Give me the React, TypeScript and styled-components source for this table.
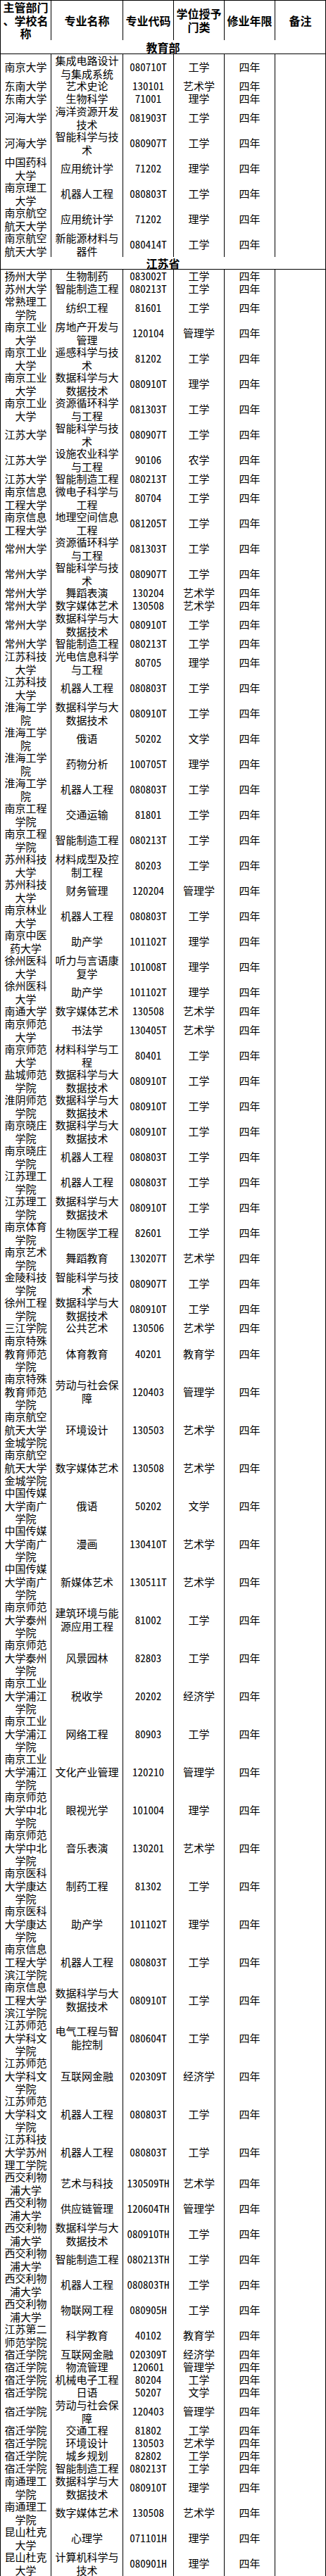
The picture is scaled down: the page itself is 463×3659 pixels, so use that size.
import React from "react";
import styled, { createGlobalStyle } from "styled-components";

const GlobalStyle = createGlobalStyle`
  html, body { margin: 0; padding: 0; background: #fff; }
  body { font-family: "Noto Sans CJK SC", sans-serif; color: #000; }
`;

const COLS = "71px 101px 71px 71px 71px 71px";
const PITCH = 18;

const Table = styled.div`
  width: 463px;
  box-sizing: border-box;
  background: #000;
  padding: 1px;
  display: flex;
  flex-direction: column;
  gap: 1px;
`;

const Row = styled.div<{ $h: number }>`
  display: grid;
  grid-template-columns: ${COLS};
  column-gap: 1px;
  height: ${(p) => p.$h}px;
`;

const Cell = styled.div<{ $mono?: boolean }>`
  background: #fff;
  display: flex;
  align-items: center;
  justify-content: center;
  text-align: center;
  min-width: 0;
  overflow: visible;
  font-size: 15px;
  line-height: 18.67px;
  font-family: ${(p) =>
    p.$mono
      ? `"Noto Sans Mono CJK SC", "Noto Sans CJK SC", monospace`
      : `"Noto Sans CJK SC", sans-serif`};
`;

const HeadCell = styled(Cell)`
  font-size: 16px;
  font-weight: 700;
`;

const SectionRow = styled.div<{ $h: number }>`
  background: #fff;
  height: ${(p) => p.$h}px;
  display: flex;
  align-items: center;
  justify-content: center;
  font-size: 16px;
  font-weight: 700;
  line-height: 18px;
`;

type Item =
  | { kind: "section"; title: string; h: number }
  | { kind: "row"; s: string; m: string; c: string; d: string; n: number };

const sec = (title: string, h: number): Item => ({ kind: "section", title, h });
const r = (s: string, m: string, c: string, d: string, n: number): Item => ({
  kind: "row",
  s,
  m,
  c,
  d,
  n,
});

const data: Item[] = [
  sec("教育部", 19),
  r("南京大学", "集成电路设计与集成系统", "080710T", "工学", 2),
  r("东南大学", "艺术史论", "130101", "艺术学", 1),
  r("东南大学", "生物科学", "71001", "理学", 1),
  r("河海大学", "海洋资源开发技术", "081903T", "工学", 2),
  r("河海大学", "智能科学与技术", "080907T", "工学", 2),
  r("中国药科大学", "应用统计学", "71202", "理学", 2),
  r("南京理工大学", "机器人工程", "080803T", "工学", 2),
  r("南京航空航天大学", "应用统计学", "71202", "理学", 2),
  r("南京航空航天大学", "新能源材料与器件", "080414T", "工学", 2),
  sec("江苏省", 17),
  r("扬州大学", "生物制药", "083002T", "工学", 1),
  r("苏州大学", "智能制造工程", "080213T", "工学", 1),
  r("常熟理工学院", "纺织工程", "81601", "工学", 2),
  r("南京工业大学", "房地产开发与管理", "120104", "管理学", 2),
  r("南京工业大学", "遥感科学与技术", "81202", "工学", 2),
  r("南京工业大学", "数据科学与大数据技术", "080910T", "理学", 2),
  r("南京工业大学", "资源循环科学与工程", "081303T", "工学", 2),
  r("江苏大学", "智能科学与技术", "080907T", "工学", 2),
  r("江苏大学", "设施农业科学与工程", "90106", "农学", 2),
  r("江苏大学", "智能制造工程", "080213T", "工学", 1),
  r("南京信息工程大学", "微电子科学与工程", "80704", "工学", 2),
  r("南京信息工程大学", "地理空间信息工程", "081205T", "工学", 2),
  r("常州大学", "资源循环科学与工程", "081303T", "工学", 2),
  r("常州大学", "智能科学与技术", "080907T", "工学", 2),
  r("常州大学", "舞蹈表演", "130204", "艺术学", 1),
  r("常州大学", "数字媒体艺术", "130508", "艺术学", 1),
  r("常州大学", "数据科学与大数据技术", "080910T", "工学", 2),
  r("常州大学", "智能制造工程", "080213T", "工学", 1),
  r("江苏科技大学", "光电信息科学与工程", "80705", "理学", 2),
  r("江苏科技大学", "机器人工程", "080803T", "工学", 2),
  r("淮海工学院", "数据科学与大数据技术", "080910T", "工学", 2),
  r("淮海工学院", "俄语", "50202", "文学", 2),
  r("淮海工学院", "药物分析", "100705T", "理学", 2),
  r("淮海工学院", "机器人工程", "080803T", "工学", 2),
  r("南京工程学院", "交通运输", "81801", "工学", 2),
  r("南京工程学院", "智能制造工程", "080213T", "工学", 2),
  r("苏州科技大学", "材料成型及控制工程", "80203", "工学", 2),
  r("苏州科技大学", "财务管理", "120204", "管理学", 2),
  r("南京林业大学", "机器人工程", "080803T", "工学", 2),
  r("南京中医药大学", "助产学", "101102T", "理学", 2),
  r("徐州医科大学", "听力与言语康复学", "101008T", "理学", 2),
  r("徐州医科大学", "助产学", "101102T", "理学", 2),
  r("南通大学", "数字媒体艺术", "130508", "艺术学", 1),
  r("南京师范大学", "书法学", "130405T", "艺术学", 2),
  r("南京师范大学", "材料科学与工程", "80401", "工学", 2),
  r("盐城师范学院", "数据科学与大数据技术", "080910T", "工学", 2),
  r("淮阴师范学院", "数据科学与大数据技术", "080910T", "工学", 2),
  r("南京晓庄学院", "数据科学与大数据技术", "080910T", "工学", 2),
  r("南京晓庄学院", "机器人工程", "080803T", "工学", 2),
  r("江苏理工学院", "机器人工程", "080803T", "工学", 2),
  r("江苏理工学院", "数据科学与大数据技术", "080910T", "工学", 2),
  r("南京体育学院", "生物医学工程", "82601", "工学", 2),
  r("南京艺术学院", "舞蹈教育", "130207T", "艺术学", 2),
  r("金陵科技学院", "智能科学与技术", "080907T", "工学", 2),
  r("徐州工程学院", "数据科学与大数据技术", "080910T", "工学", 2),
  r("三江学院", "公共艺术", "130506", "艺术学", 1),
  r("南京特殊教育师范学院", "体育教育", "40201", "教育学", 3),
  r("南京特殊教育师范学院", "劳动与社会保障", "120403", "管理学", 3),
  r("南京航空航天大学金城学院", "环境设计", "130503", "艺术学", 3),
  r("南京航空航天大学金城学院", "数字媒体艺术", "130508", "艺术学", 3),
  r("中国传媒大学南广学院", "俄语", "50202", "文学", 3),
  r("中国传媒大学南广学院", "漫画", "130410T", "艺术学", 3),
  r("中国传媒大学南广学院", "新媒体艺术", "130511T", "艺术学", 3),
  r("南京师范大学泰州学院", "建筑环境与能源应用工程", "81002", "工学", 3),
  r("南京师范大学泰州学院", "风景园林", "82803", "工学", 3),
  r("南京工业大学浦江学院", "税收学", "20202", "经济学", 3),
  r("南京工业大学浦江学院", "网络工程", "80903", "工学", 3),
  r("南京工业大学浦江学院", "文化产业管理", "120210", "管理学", 3),
  r("南京师范大学中北学院", "眼视光学", "101004", "理学", 3),
  r("南京师范大学中北学院", "音乐表演", "130201", "艺术学", 3),
  r("南京医科大学康达学院", "制药工程", "81302", "工学", 3),
  r("南京医科大学康达学院", "助产学", "101102T", "理学", 3),
  r("南京信息工程大学滨江学院", "机器人工程", "080803T", "工学", 3),
  r("南京信息工程大学滨江学院", "数据科学与大数据技术", "080910T", "工学", 3),
  r("江苏师范大学科文学院", "电气工程与智能控制", "080604T", "工学", 3),
  r("江苏师范大学科文学院", "互联网金融", "020309T", "经济学", 3),
  r("江苏师范大学科文学院", "机器人工程", "080803T", "工学", 3),
  r("江苏科技大学苏州理工学院", "机器人工程", "080803T", "工学", 3),
  r("西交利物浦大学", "艺术与科技", "130509TH", "艺术学", 2),
  r("西交利物浦大学", "供应链管理", "120604TH", "管理学", 2),
  r("西交利物浦大学", "数据科学与大数据技术", "080910TH", "工学", 2),
  r("西交利物浦大学", "智能制造工程", "080213TH", "工学", 2),
  r("西交利物浦大学", "机器人工程", "080803TH", "工学", 2),
  r("西交利物浦大学", "物联网工程", "080905H", "工学", 2),
  r("江苏第二师范学院", "科学教育", "40102", "教育学", 2),
  r("宿迁学院", "互联网金融", "020309T", "经济学", 1),
  r("宿迁学院", "物流管理", "120601", "管理学", 1),
  r("宿迁学院", "机械电子工程", "80204", "工学", 1),
  r("宿迁学院", "日语", "50207", "文学", 1),
  r("宿迁学院", "劳动与社会保障", "120403", "管理学", 2),
  r("宿迁学院", "交通工程", "81802", "工学", 1),
  r("宿迁学院", "环境设计", "130503", "艺术学", 1),
  r("宿迁学院", "城乡规划", "82802", "工学", 1),
  r("宿迁学院", "智能制造工程", "080213T", "工学", 1),
  r("南通理工学院", "数据科学与大数据技术", "080910T", "理学", 2),
  r("南通理工学院", "数字媒体艺术", "130508", "艺术学", 2),
  r("昆山杜克大学", "心理学", "071101H", "理学", 2),
  r("昆山杜克大学", "计算机科学与技术", "080901H", "理学", 2),
];

export default function App() {
  return (
    <>
      <GlobalStyle />
      <Table>
        <Row $h={55}>
          <HeadCell>
            主管部门
            <br />
            、学校名
            <br />
            称
          </HeadCell>
          <HeadCell>专业名称</HeadCell>
          <HeadCell>专业代码</HeadCell>
          <HeadCell>
            学位授予
            <br />
            门类
          </HeadCell>
          <HeadCell>修业年限</HeadCell>
          <HeadCell>备注</HeadCell>
        </Row>
        {data.map((it, i) =>
          it.kind === "section" ? (
            <SectionRow key={i} $h={it.h}>
              {it.title}
            </SectionRow>
          ) : (
            <Row key={i} $h={it.n * PITCH - 1}>
              <Cell>{it.s}</Cell>
              <Cell>{it.m}</Cell>
              <Cell $mono>{it.c}</Cell>
              <Cell>{it.d}</Cell>
              <Cell>四年</Cell>
              <Cell />
            </Row>
          )
        )}
      </Table>
    </>
  );
}
